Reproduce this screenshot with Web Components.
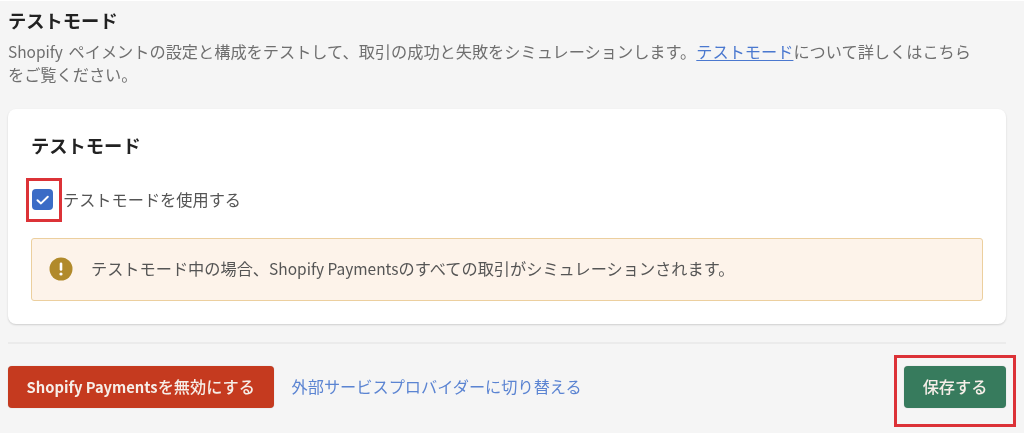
<!DOCTYPE html>
<html lang="ja">
<head>
<meta charset="utf-8">
<title>テストモード</title>
<style>
  html, body { margin: 0; height: 100%; background: #fff; }
  body { font-family: "Noto Sans CJK JP", "Noto Sans", sans-serif; overflow: hidden; }
  a { color: #4a78cf; text-underline-offset: 2px; }
  .lat { font-size: .955em; }
  .lat-d { font-size: .955em; margin-right: 2px; }
  .lat-b { font-size: .91em; font-weight: 700; }
</style>
</head>
<body>
<settings-page>
  <span slot="title">テストモード</span>
  <span slot="desc"><span class="lat-d">Shopify</span> ペイメントの設定と構成をテストして、取引の成功と失敗をシミュレーションします。<a href="#">テストモード</a><span>について詳しくはこちら</span><br><span>をご覧ください。</span></span>
  <test-card>
    <span slot="title">テストモード</span>
    <check-row>テストモードを使用する</check-row>
    <warn-banner>テストモード中の場合、<span class="lat">Shopify Payments</span>のすべての取引がシミュレーションされます。</warn-banner>
  </test-card>
  <action-bar>
    <ui-button slot="left" color="#c53a1f"><span class="lat-b">Shopify Payments</span>を無効にする</ui-button>
    <span slot="link">外部サービスプロバイダーに切り替える</span>
    <ui-button slot="right" color="#377b5d" marked>保存する</ui-button>
  </action-bar>
</settings-page>

<script>
  class settingsPage extends HTMLElement {
    constructor() {
      super();
      this.attachShadow({ mode: "open" });
      this.shadowRoot.innerHTML = `
        <style>
          :host {
            display: flex;
            flex-direction: column;
            height: 432px;
            margin-top: 1px;
            padding: 0 18px 0 8px;
            box-sizing: border-box;
            background: #f5f5f5;
            filter: blur(0.45px);
          }
          h1 {
            margin: 6px 0 0;
            font-size: 18.3px;
            line-height: 26px;
            font-weight: 700;
            color: #222;
          }
          p {
            margin: 7px 0 23px;
            font-size: 16.2px;
            line-height: 23px;
            color: #6f6f6f;
            white-space: nowrap;
          }
        </style>
        <h1><slot name="title"></slot></h1>
        <p><slot name="desc"></slot></p>
        <slot></slot>
      `;
    }
  }

  class testCard extends HTMLElement {
    constructor() {
      super();
      this.attachShadow({ mode: "open" });
      this.shadowRoot.innerHTML = `
        <style>
          :host {
            display: block;
            height: 215px;
            box-sizing: border-box;
            padding: 23px 23px 0;
            background: #fff;
            border-radius: 8px;
            box-shadow: 0 1px 2px rgba(0, 0, 0, .16);
          }
          h2 {
            margin: 0 0 31px;
            font-size: 18.3px;
            line-height: 26px;
            font-weight: 700;
            color: #222;
          }
        </style>
        <h2><slot name="title"></slot></h2>
        <slot></slot>
      `;
    }
  }

  class checkRow extends HTMLElement {
    constructor() {
      super();
      this.attachShadow({ mode: "open" });
      this.shadowRoot.innerHTML = `
        <style>
          :host {
            display: flex;
            align-items: center;
            gap: 10px;
            height: 21px;
            padding-left: 1px;
            margin-bottom: 28px;
            font-size: 16.2px;
            color: #555;
          }
          .box {
            position: relative;
            width: 21px;
            height: 21px;
            flex: none;
            border-radius: 4px;
            background: #3b6cc6;
          }
          .box svg { display: block; }
          .label { padding-bottom: 2px; }
          /* red annotation drawn over the screenshot */
          .box::after {
            content: "";
            position: absolute;
            left: -6px;
            top: -11px;
            width: 36px;
            height: 44px;
            box-sizing: border-box;
            border: 3px solid #dc3237;
          }
        </style>
        <span class="box">
          <svg width="21" height="21" viewBox="0 0 21 21" fill="none">
            <path d="M5.5 11.2l3.5 3.2L15.8 7.8" stroke="#fff" stroke-width="2" stroke-linecap="round" stroke-linejoin="round"/>
          </svg>
        </span>
        <span class="label"><slot></slot></span>
      `;
    }
  }

  class warnBanner extends HTMLElement {
    constructor() {
      super();
      this.attachShadow({ mode: "open" });
      this.shadowRoot.innerHTML = `
        <style>
          :host {
            display: flex;
            align-items: center;
            gap: 18px;
            height: 63px;
            box-sizing: border-box;
            padding: 0 17px;
            background: #fdf3ea;
            border: 1px solid #eccf9e;
            border-radius: 3px;
            font-size: 16.2px;
            color: #555;
          }
          svg { display: block; flex: none; margin-bottom: 2px; }
          .text { padding-bottom: 4px; }
        </style>
        <svg width="24" height="24" viewBox="0 0 24 24">
          <circle cx="12" cy="12" r="11.5" fill="#b18a2b"/>
          <rect x="10.7" y="5.5" width="2.6" height="8.2" rx="1.3" fill="#fff"/>
          <circle cx="12" cy="17" r="1.6" fill="#fff"/>
        </svg>
        <span class="text"><slot></slot></span>
      `;
    }
  }

  class actionBar extends HTMLElement {
    constructor() {
      super();
      this.attachShadow({ mode: "open" });
      this.shadowRoot.innerHTML = `
        <style>
          :host {
            display: flex;
            align-items: center;
            gap: 18px;
            margin-top: 18px;
            padding-top: 22px;
            border-top: 2px solid #ebebeb;
            font-size: 16.2px;
            color: #5b84d2;
          }
          .link { padding-bottom: 2px; }
          .end { margin-left: auto; }
        </style>
        <slot name="left"></slot>
        <div class="link"><slot name="link"></slot></div>
        <div class="end"><slot name="right"></slot></div>
      `;
    }
  }

  class uiButton extends HTMLElement {
    constructor() {
      super();
      this.attachShadow({ mode: "open" });
      this.shadowRoot.innerHTML = `
        <style>
          :host {
            display: block;
            position: relative;
          }
          button {
            display: block;
            height: 42px;
            padding: 0 18.6px 2px;
            border: 0;
            border-radius: 4px;
            background: var(--bg);
            color: #f6eee8;
            font: 500 16.2px "Noto Sans CJK JP", "Noto Sans", sans-serif;
            box-shadow: 0 0 1px rgba(0, 0, 0, .25);
          }
          /* red annotation drawn over the screenshot */
          :host([marked])::after {
            content: "";
            position: absolute;
            left: -10px;
            top: -11px;
            right: -10px;
            bottom: -19px;
            border: 3px solid #dc3237;
          }
        </style>
        <button><slot></slot></button>
      `;
    }
    connectedCallback() {
      this.style.setProperty("--bg", this.getAttribute("color"));
    }
  }

  customElements.define("settings-page", settingsPage);
  customElements.define("test-card", testCard);
  customElements.define("check-row", checkRow);
  customElements.define("warn-banner", warnBanner);
  customElements.define("action-bar", actionBar);
  customElements.define("ui-button", uiButton);
</script>
</body>
</html>
